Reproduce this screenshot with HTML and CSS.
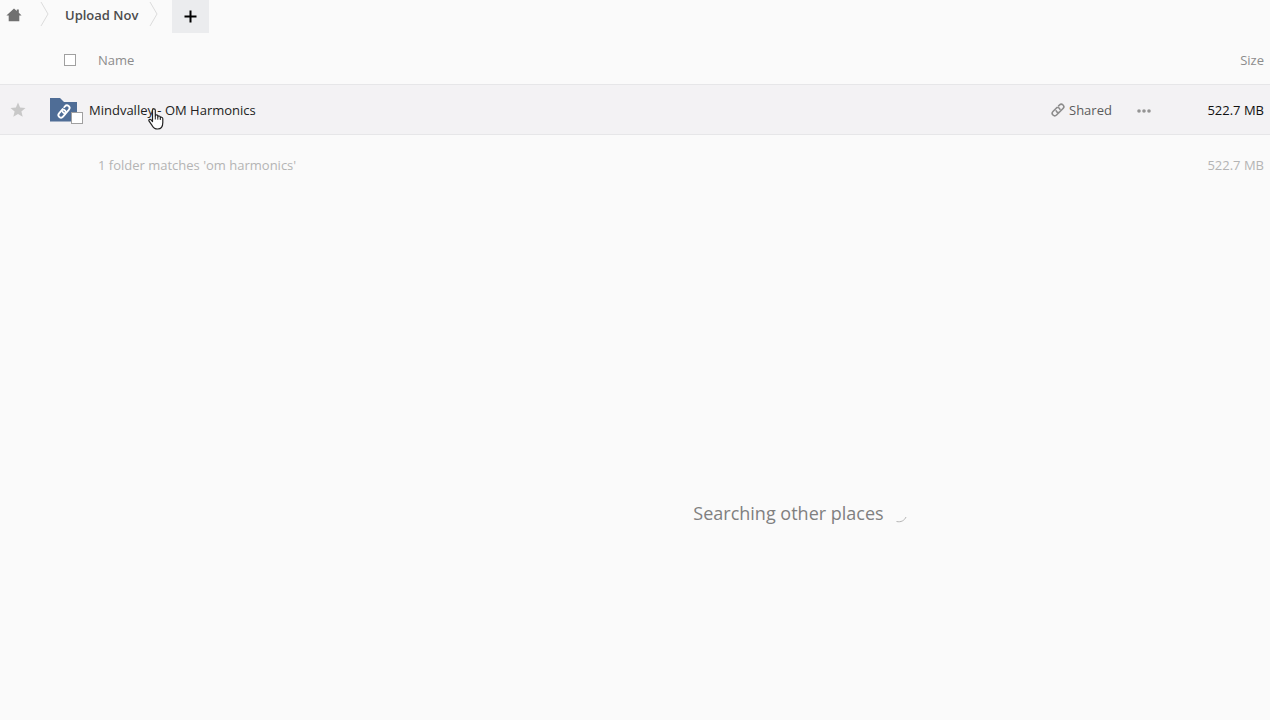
FILE: index.html
```html
<!DOCTYPE html>
<html lang="en">
<head>
    <meta charset="UTF-8">
    <meta name="viewport" content="width=device-width, initial-scale=1.0">
    <title>Files</title>
    <link rel="stylesheet" href="styles.css">
</head>
<body>

    <!-- Breadcrumbs -->
    <nav class="breadcrumbs">
        <a class="home" href="#" aria-label="Home">
            <svg width="16" height="14" viewBox="0 0 16 14"><path d="M8 0.5 L10.8 3 V1.5 H12.8 V4.8 L15.6 7.6 H13.3 V13.2 H2.7 V7.6 H0.4 Z" fill="#707070"/></svg>
        </a>
        <svg class="crumb-arrow" width="9" height="28" viewBox="0 0 9 28"><path d="M1 2 L8 14 L1 26" fill="none" stroke="#dcdcdc"/></svg>
        <a class="crumb" href="#">Upload Nov</a>
        <svg class="crumb-arrow" width="9" height="28" viewBox="0 0 9 28"><path d="M1 2 L8 14 L1 26" fill="none" stroke="#dcdcdc"/></svg>
        <button class="add" type="button" aria-label="New">
            <svg width="13" height="13" viewBox="0 0 13 13"><path d="M6.5 0.5 V12.5 M0.5 6.5 H12.5" stroke="#000" stroke-width="2"/></svg>
        </button>
    </nav>

    <!-- File list -->
    <table class="files">
        <thead>
            <tr>
                <th class="col-star"></th>
                <th class="col-name">
                    <div class="head-name">
                        <input class="check" type="checkbox" id="selectAll" aria-label="Select all">
                        <span>Name</span>
                    </div>
                </th>
                <th class="col-shared"></th>
                <th class="col-menu"></th>
                <th class="col-size">Size</th>
            </tr>
        </thead>
        <tbody>
            <tr>
                <td class="col-star">
                    <button class="icon-button" type="button" aria-label="Favorite">
                        <svg width="16" height="16" viewBox="0 0 16 16"><path d="M8 0.6 L10.1 5.6 L15.5 6 L11.4 9.5 L12.7 14.8 L8 12 L3.3 14.8 L4.6 9.5 L0.5 6 L5.9 5.6 Z" fill="#c8c8c8"/></svg>
                    </button>
                </td>
                <td class="col-name">
                    <div class="file">
                        <div class="folder">
                            <svg width="28" height="24" viewBox="0 0 28 24">
                                <path d="M0 0 H10 L14 4 H27 V23.5 H0 Z" fill="#4f6d96"/>
                                <g transform="translate(14 13.5) rotate(-50)" fill="none" stroke="#fff" stroke-width="1.8" stroke-linecap="round">
                                    <path d="M1 -2.6 H-4.6 A2.6 2.6 0 0 0 -4.6 2.6 H-1.6 M-0.4 -2.6 A2.6 2.6 0 0 1 1 1.4"/>
                                    <path d="M-1 2.6 H4.6 A2.6 2.6 0 0 0 4.6 -2.6 H3.4 M0.4 2.6 A2.6 2.6 0 0 1 -1 -1.2"/>
                                </g>
                            </svg>
                            <input class="check file-check" type="checkbox" aria-label="Select Mindvalley - OM Harmonics">
                        </div>
                        <a class="file-name" href="#">Mindvalley - OM Harmonics</a>
                        <svg class="pointer" width="16" height="22" viewBox="0 0 16 22">
                            <path d="M4.5 13.5 V2.3 C4.5 0.3 7.3 0.3 7.3 2.3 V8 C7.3 6.4 9.8 6.5 9.8 8.2 V9 C10 7.5 12.3 7.7 12.3 9.3 V10 C12.6 8.8 14.8 9 14.8 10.7 V14.5 C14.8 18.5 13 21 9.6 21 C6.8 21 5.4 19.9 4.2 17.7 L1.1 13.2 C0.3 11.8 2 10.7 3.1 11.9 Z" fill="#fff" stroke="#222" stroke-width="1.2" stroke-linejoin="round"/>
                            <path d="M7.3 8 V11.5 M9.8 9 V11.7 M12.3 10 V12" fill="none" stroke="#222"/>
                        </svg>
                    </div>
                </td>
                <td class="col-shared">
                    <a class="shared" href="#">
                        <svg width="14" height="14" viewBox="0 0 14 14">
                            <g transform="translate(7 7) rotate(-45)" fill="none" stroke="#8c8c8c" stroke-width="1.6" stroke-linecap="round">
                                <path d="M1 -2.5 H-4.6 A2.5 2.5 0 0 0 -4.6 2.5 H-1.8 M1 -2.5 A2.5 2.5 0 0 1 1.8 1"/>
                                <path d="M-1 2.5 H4.6 A2.5 2.5 0 0 0 4.6 -2.5 H3.4 M-1 2.5 A2.5 2.5 0 0 1 -1.8 -0.8"/>
                            </g>
                        </svg>
                        <span>Shared</span>
                    </a>
                </td>
                <td class="col-menu">
                    <button class="icon-button" type="button" aria-label="More actions">
                        <svg width="14" height="4" viewBox="0 0 14 4" fill="#949494"><circle cx="2" cy="2" r="1.8"/><circle cx="7" cy="2" r="1.8"/><circle cx="12" cy="2" r="1.8"/></svg>
                    </button>
                </td>
                <td class="col-size">522.7 MB</td>
            </tr>
        </tbody>
        <tfoot>
            <tr>
                <td class="col-star"></td>
                <td class="col-name"><div class="summary">1 folder matches 'om harmonics'</div></td>
                <td class="col-shared"></td>
                <td class="col-menu"></td>
                <td class="col-size">522.7 MB</td>
            </tr>
        </tfoot>
    </table>

    <!-- Search status -->
    <div class="searching">
        <span>Searching other places</span>
        <svg width="11" height="12" viewBox="0 0 11 12"><path d="M0.5 10.5 C5 11.5 8.5 9.5 10 6" fill="none" stroke="#b4b4b4"/></svg>
    </div>

</body>
</html>
```

FILE: styles.css
```css
/* General Styles */
body {
    font-family: 'Open Sans', sans-serif;
    font-size: 13px;
    line-height: 20px;
    margin: 0;
    background: #fafafa;
    color: #8c8c8c;
}

a {
    color: inherit;
    text-decoration: none;
}

svg {
    display: block;
    flex: none;
}

/* Breadcrumbs */
.breadcrumbs {
    display: flex;
    align-items: flex-start;
    height: 33px;
    padding-left: 6px;
}

.home {
    padding: 8px 18px 0 0;
}

.crumb {
    padding: 5px 11px 0 16px;
    font-weight: 600;
    color: #4c4c4c;
}

.add {
    display: flex;
    justify-content: center;
    align-items: center;
    width: 37px;
    height: 33px;
    margin-left: 14px;
    padding: 0;
    border: none;
    background: #ebecee;
    cursor: pointer;
}

/* File list */
.files {
    width: 100%;
    border-collapse: collapse;
    table-layout: fixed;
}

.files th,
.files td {
    height: 49px;
    padding: 0;
    text-align: left;
    font-weight: normal;
}

.files th {
    padding-top: 2px;
}

.files tbody tr {
    background: #f3f2f4;
    border-top: 1px solid #e6e6e8;
    border-bottom: 1px solid #e6e6e8;
}

.files .col-star {
    width: 50px;
}

.files .col-shared {
    width: 86px;
}

.files .col-menu {
    width: 48px;
}

.files .col-size {
    width: 79px;
    padding-right: 6px;
    text-align: right;
}

.files tbody .col-size {
    color: #111;
}

.files tfoot td {
    height: 60px;
    color: #b4b4b4;
}

.head-name {
    display: flex;
    align-items: center;
    gap: 22px;
    padding-left: 14px;
}

.check {
    appearance: none;
    width: 12px;
    height: 12px;
    margin: 0;
    box-sizing: border-box;
    border: 1px solid #a0a0a0;
    background: #fff;
}

.icon-button {
    display: block;
    padding: 0;
    border: none;
    background: none;
    cursor: pointer;
}

.col-star .icon-button {
    margin-left: 10px;
}

.col-menu .icon-button {
    margin-top: 3px;
}

.file {
    display: flex;
    align-items: center;
    gap: 11px;
    position: relative;
}

.folder {
    position: relative;
}

.file-check {
    position: absolute;
    left: 21px;
    top: 14px;
}

.file-name {
    color: #222;
}

/* Hand pointer over the file name */
.pointer {
    position: absolute;
    left: 98px;
    top: 10px;
}

.shared {
    display: flex;
    align-items: center;
    gap: 4px;
    color: #5c5c5c;
}

.summary {
    padding-left: 48px;
}

/* Search status */
.searching {
    display: flex;
    justify-content: center;
    align-items: center;
    gap: 12px;
    padding: 305px 0 0 330px;
    font-size: 18px;
    line-height: 26px;
    color: #808080;
}

.searching svg {
    margin-top: 8px;
}
```
